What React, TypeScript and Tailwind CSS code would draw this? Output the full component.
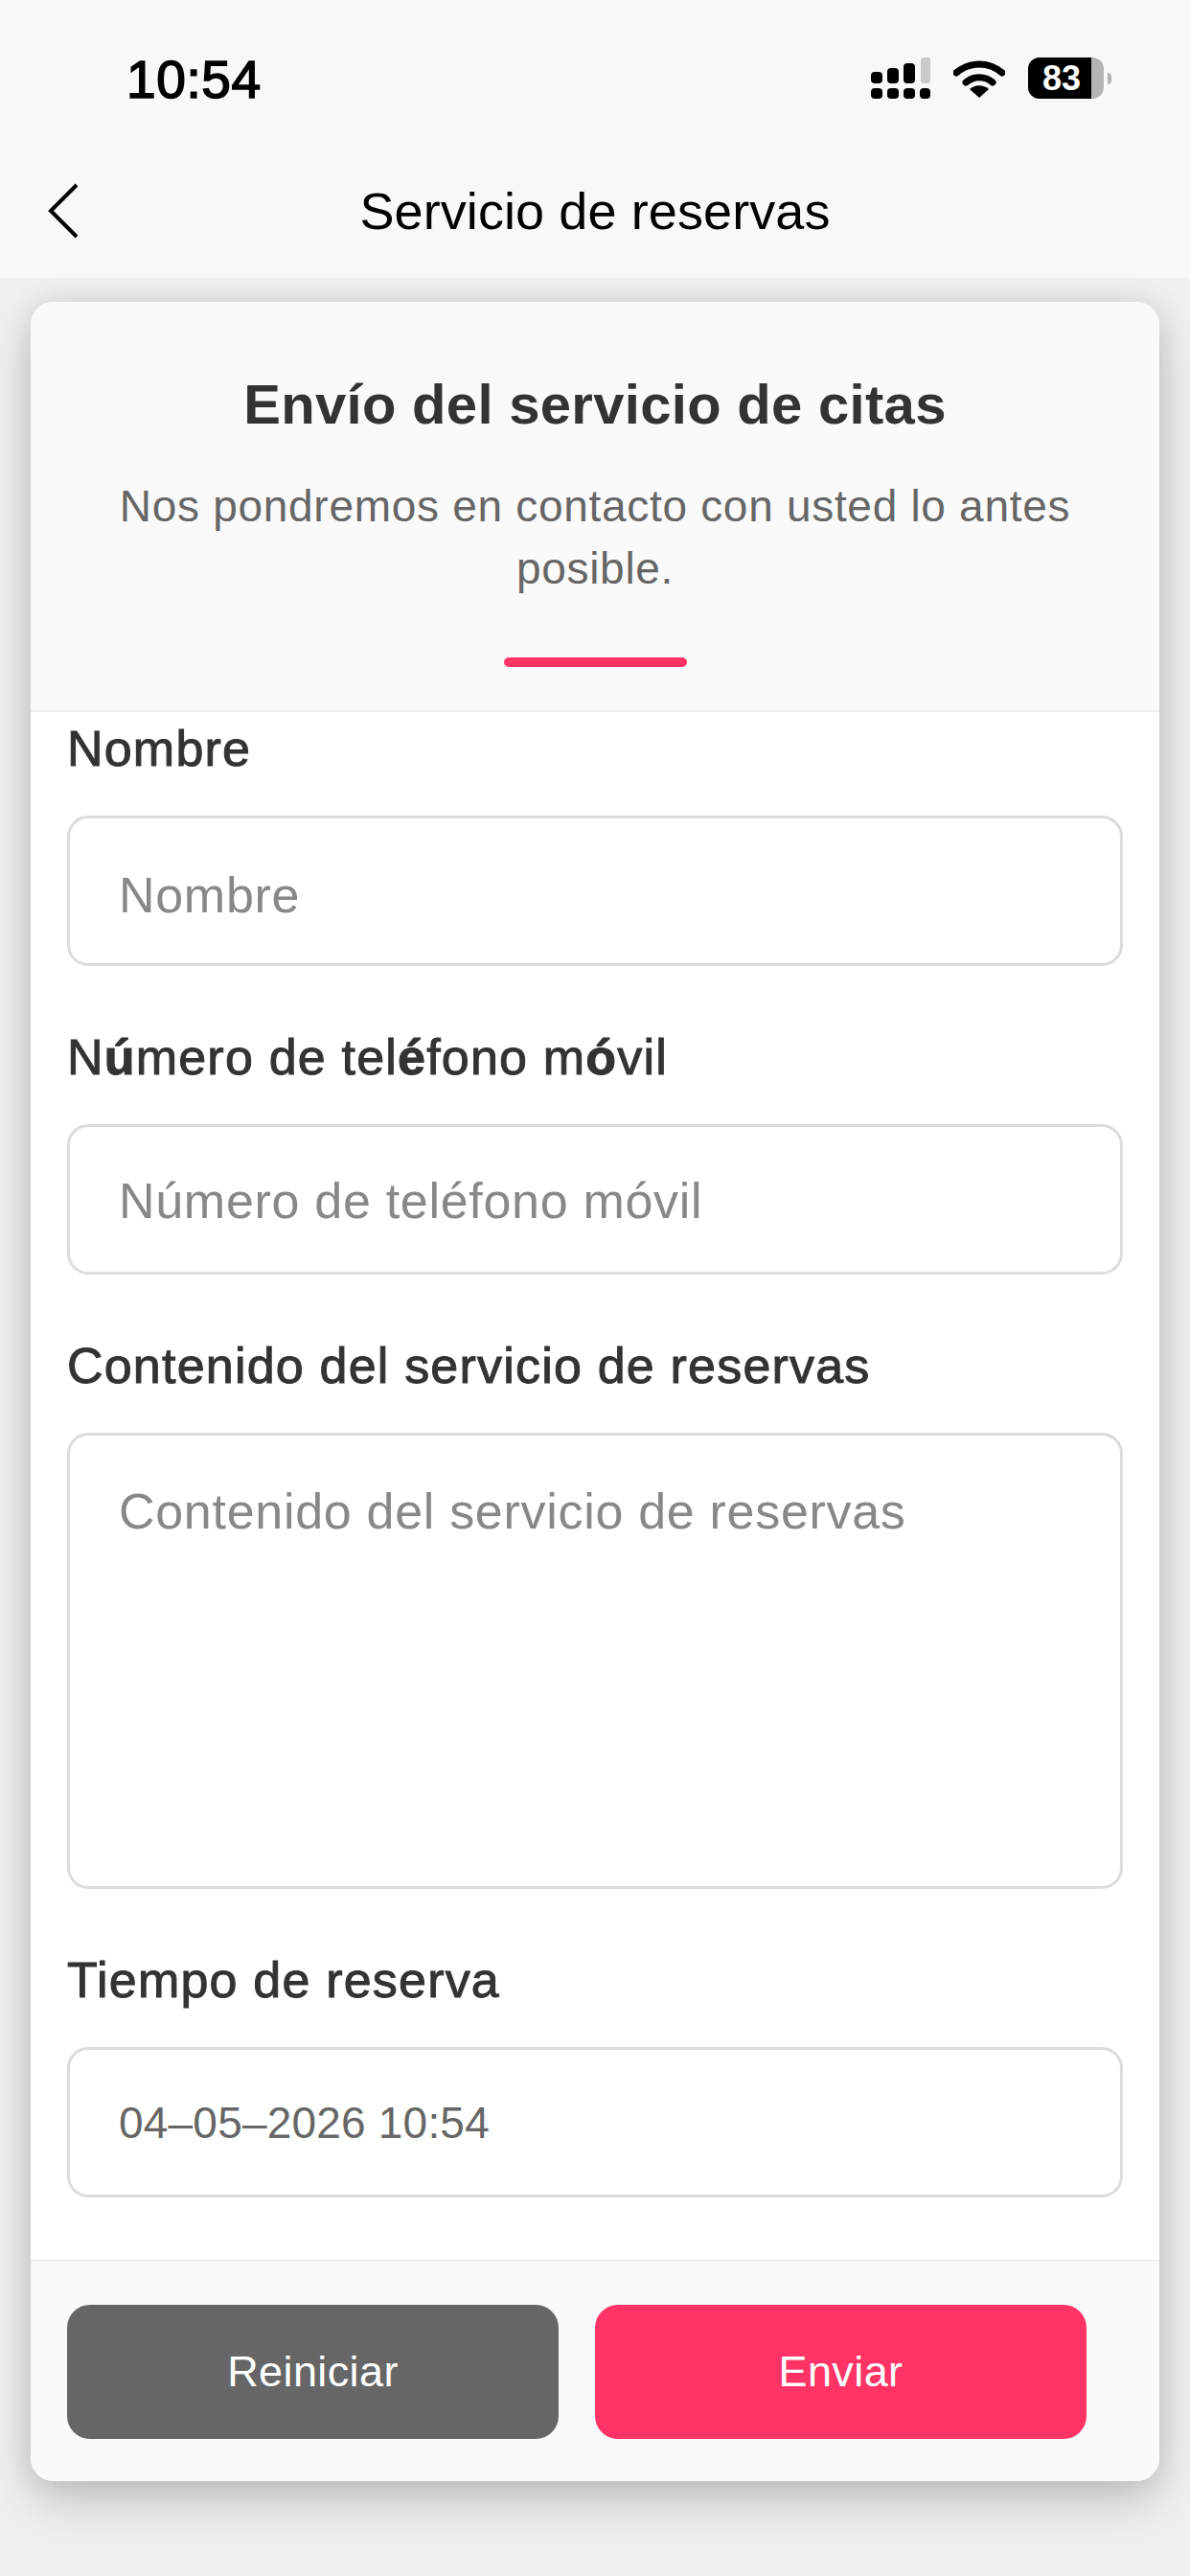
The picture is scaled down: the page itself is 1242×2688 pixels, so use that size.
const sans = "font-['Liberation_Sans','Helvetica',sans-serif]";

function SignalIcon() {
  return (
    <svg width="62" height="43" viewBox="0 0 62 43" className="block">
      <rect x="0" y="32" width="12" height="11" rx="4" fill="#000" />
      <rect x="17" y="32" width="12" height="11" rx="4" fill="#000" />
      <rect x="34" y="32" width="12" height="11" rx="4" fill="#000" />
      <rect x="51" y="32" width="11" height="11" rx="4" fill="#000" />
      <rect x="0" y="15" width="12" height="12" rx="4" fill="#000" />
      <rect x="17" y="11" width="12" height="16" rx="4" fill="#000" />
      <rect x="34" y="6" width="12" height="21" rx="4" fill="#000" />
      <rect x="52" y="0" width="10" height="27" rx="3" fill="#c8c8c8" />
    </svg>
  );
}

function WifiIcon() {
  return (
    <svg width="54" height="42" viewBox="0 0 54 42" className="block">
      <path d="M3 15 C17 3 37 3 51 15" fill="none" stroke="#000" strokeWidth="7" strokeLinecap="round" />
      <path d="M13 25 C21 18 33 18 41 25" fill="none" stroke="#000" strokeWidth="7" strokeLinecap="round" />
      <path d="M27 41 L17 32 C23 27 31 27 37 32 Z" fill="#000" />
    </svg>
  );
}

function Battery() {
  return (
    <div className="flex items-center gap-[4px]">
      <div className="w-[79px] h-[43px] rounded-[12px] bg-[#b4b4b4] overflow-hidden">
        <div className="w-[66px] h-full bg-black flex items-center justify-center pl-[4px] text-white text-[36px] font-bold leading-none">
          83
        </div>
      </div>
      <div className="w-[4px] h-[12px] rounded-r-full bg-[#b4b4b4]" />
    </div>
  );
}

function Field({ label, children }: { label: React.ReactNode; children: React.ReactNode }) {
  return (
    <div className="flex flex-col">
      <label className="h-[55px] text-[#333] text-[52px] leading-[55px] tracking-[1.2px] [-webkit-text-stroke:1px_#333]">
        {label}
      </label>
      <div className="mt-[42px]">{children}</div>
    </div>
  );
}

const boxClass =
  "w-full border-[3px] border-[#dcdcdc] rounded-[22px] bg-white pl-[51px] pr-[30px] outline-none text-[52px] tracking-[0.7px] placeholder:text-[#888]";

export default function App() {
  return (
    <div className={`${sans} relative w-[1242px] h-[2688px] overflow-hidden bg-[#f0f0f0] flex flex-col`}>
      <div className="relative z-10 bg-[#f8f8f8] h-[290px] shrink-0">
        <div className="h-[166px] flex items-start justify-between pt-[60px] pl-[132px] pr-[82px]">
          <span className="text-[55px] leading-[46px] text-black tracking-[0.6px] [-webkit-text-stroke:1.6px_#000]">10:54</span>
          <div className="flex items-center">
            <SignalIcon />
            <div className="ml-[24px]">
              <WifiIcon />
            </div>
            <div className="ml-[24px]">
              <Battery />
            </div>
          </div>
        </div>
        <div className="relative h-[108px] flex items-center justify-center">
          <svg width="34" height="58" viewBox="0 0 34 58" className="absolute left-[49px] top-[25px]">
            <path d="M31 2 L4 29 L31 56" fill="none" stroke="#000" strokeWidth="4" />
          </svg>
          <h1 className="text-[54px] leading-none text-black font-normal tracking-[0.1px]">Servicio de reservas</h1>
        </div>
      </div>

      <div className="mx-[32px] mt-[25px] h-[2274px] rounded-[24px] overflow-hidden flex flex-col bg-white shadow-[0_0_30px_rgba(0,0,0,0.1),0_22px_50px_rgba(0,0,0,0.18)]">
        <div className="h-[428px] shrink-0 bg-[#fafafa] border-b-[2px] border-[#eeeeee] flex flex-col items-center pt-[75px]">
          <h2 className="text-[58px] leading-[64px] font-bold text-[#333] tracking-[0.3px]">Envío del servicio de citas</h2>
          <p className="mt-[42px] w-[1040px] text-center text-[46px] leading-[65px] text-[#666] tracking-[0.7px]">
            Nos pondremos en contacto con usted lo antes posible.
          </p>
          <div className="mt-[60px] w-[191px] h-[10px] rounded-full bg-[#ff3366]" />
        </div>

        <div className="flex-1 flex flex-col gap-[68px] px-[38px] pt-[11px]">
          <Field label="Nombre">
            <input className={`${boxClass} h-[157px] pt-[8px]`} placeholder="Nombre" />
          </Field>
          <Field
            label={
              <>
                N<b>ú</b>mero de tel<b>é</b>fono m<b>ó</b>vil
              </>
            }
          >
            <input className={`${boxClass} h-[157px] pt-[2px]`} placeholder="Número de teléfono móvil" />
          </Field>
          <Field label="Contenido del servicio de reservas">
            <textarea
              className={`${boxClass} block h-[476px] resize-none pt-[51px] leading-[56px]`}
              placeholder="Contenido del servicio de reservas"
            />
          </Field>
          <Field label="Tiempo de reserva">
            <input className={`${boxClass} h-[157px] !text-[46px] !tracking-[0.2px] text-[#666]`} defaultValue="04–05–2026 10:54" />
          </Field>
        </div>

        <div className="h-[231px] shrink-0 bg-[#fafafa] border-t-[2px] border-[#eeeeee] flex gap-[38px] pl-[38px] pt-[45px]">
          <button className="w-[513px] h-[140px] rounded-[24px] bg-[#666666] text-white text-[45px] tracking-[0.4px]">
            Reiniciar
          </button>
          <button className="w-[513px] h-[140px] rounded-[24px] bg-[#ff3366] text-white text-[45px] tracking-[0.4px]">
            Enviar
          </button>
        </div>
      </div>
    </div>
  );
}
